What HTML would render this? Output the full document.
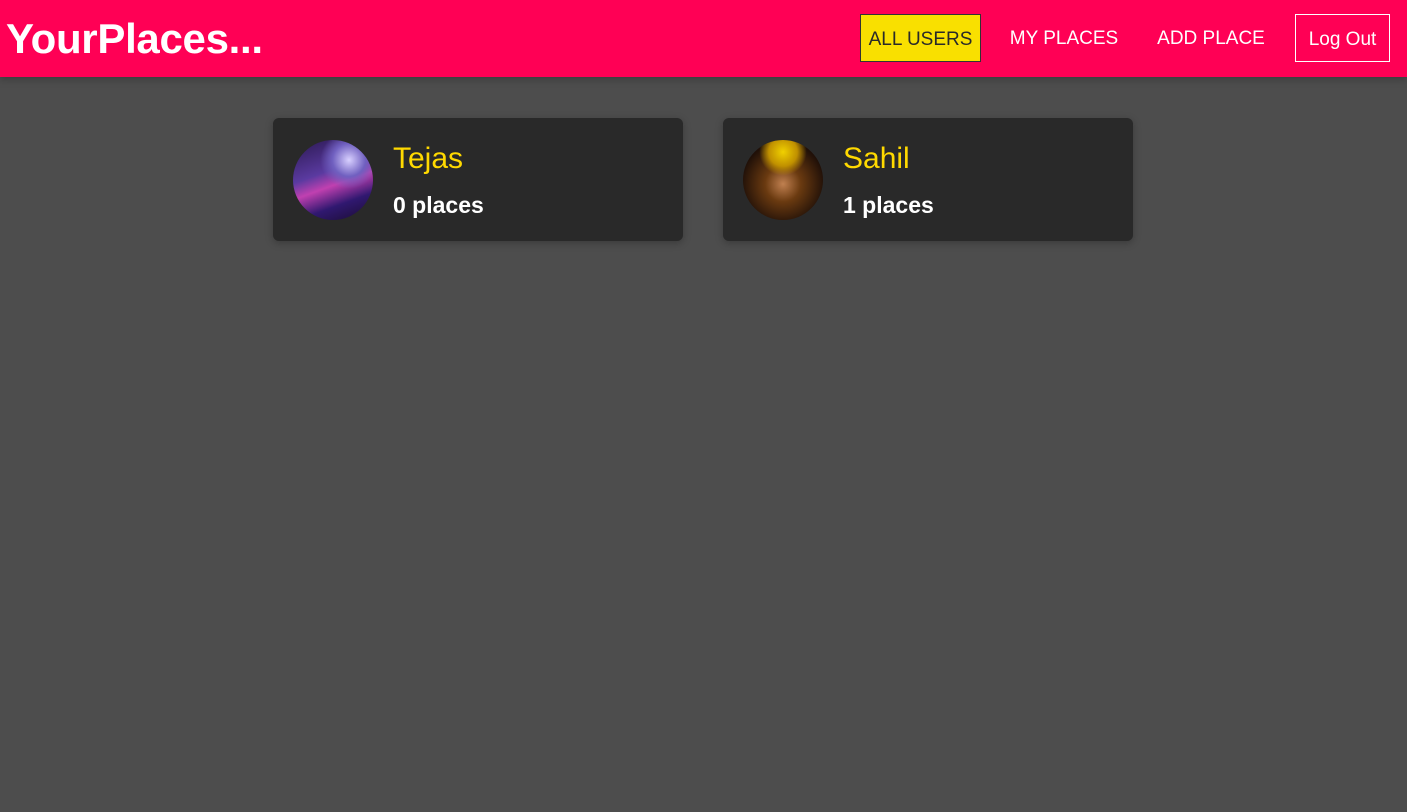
<!DOCTYPE html>
<html><head><style>
body{margin:0;background:#4d4d4d;font-family:"Liberation Sans",sans-serif;width:1407px;height:812px;overflow:hidden}
header{height:77px;background:#ff0055;position:relative;box-shadow:0 2px 8px rgba(0,0,0,.26)}
.logo{position:absolute;left:6px;top:15px;color:#fff;font-weight:bold;font-size:42px;letter-spacing:-0.3px}
.nav a{position:absolute;top:14px;height:48px;line-height:50px;color:#fff;font-size:19px;text-align:center;box-sizing:border-box}
.card{position:absolute;top:118px;width:410px;height:123px;background:#292929;border-radius:6px;box-shadow:0 2px 8px rgba(0,0,0,.26)}
.av{position:absolute;left:20px;top:22px;width:80px;height:80px;border-radius:50%}
.n{position:absolute;left:120px;top:24px;color:#ffd900;font-size:30px}
.p{position:absolute;left:120px;top:74px;color:#fff;font-size:23px;font-weight:bold}
</style></head><body>
<header><div class="logo">YourPlaces...</div>
<div class="nav">
<a style="left:860px;width:121px;background:#f9e000;border:1px solid #333;color:#292929">ALL USERS</a>
<a style="left:1000px;width:128px">MY PLACES</a>
<a style="left:1146px;width:130px">ADD PLACE</a>
<a style="left:1295px;width:95px;border:1px solid #fff">Log Out</a>
</div></header>
<div class="card" style="left:273px"><div class="av" style="background:radial-gradient(circle at 70% 25%,#d8d0ff 0,#7060c0 20%,transparent 35%),linear-gradient(160deg,#2a1850,#5a3aa0 40%,#c040b0 55%,#301870 75%,#1a0c30)"></div><div class="n">Tejas</div><div class="p">0 places</div></div>
<div class="card" style="left:723px"><div class="av" style="background:radial-gradient(circle at 50% 15%,#f0d000 0,#c09000 18%,transparent 30%),radial-gradient(circle at 50% 55%,#c08050 0,#6a3a10 30%,#201008 70%)"></div><div class="n">Sahil</div><div class="p">1 places</div></div>
</body></html>
